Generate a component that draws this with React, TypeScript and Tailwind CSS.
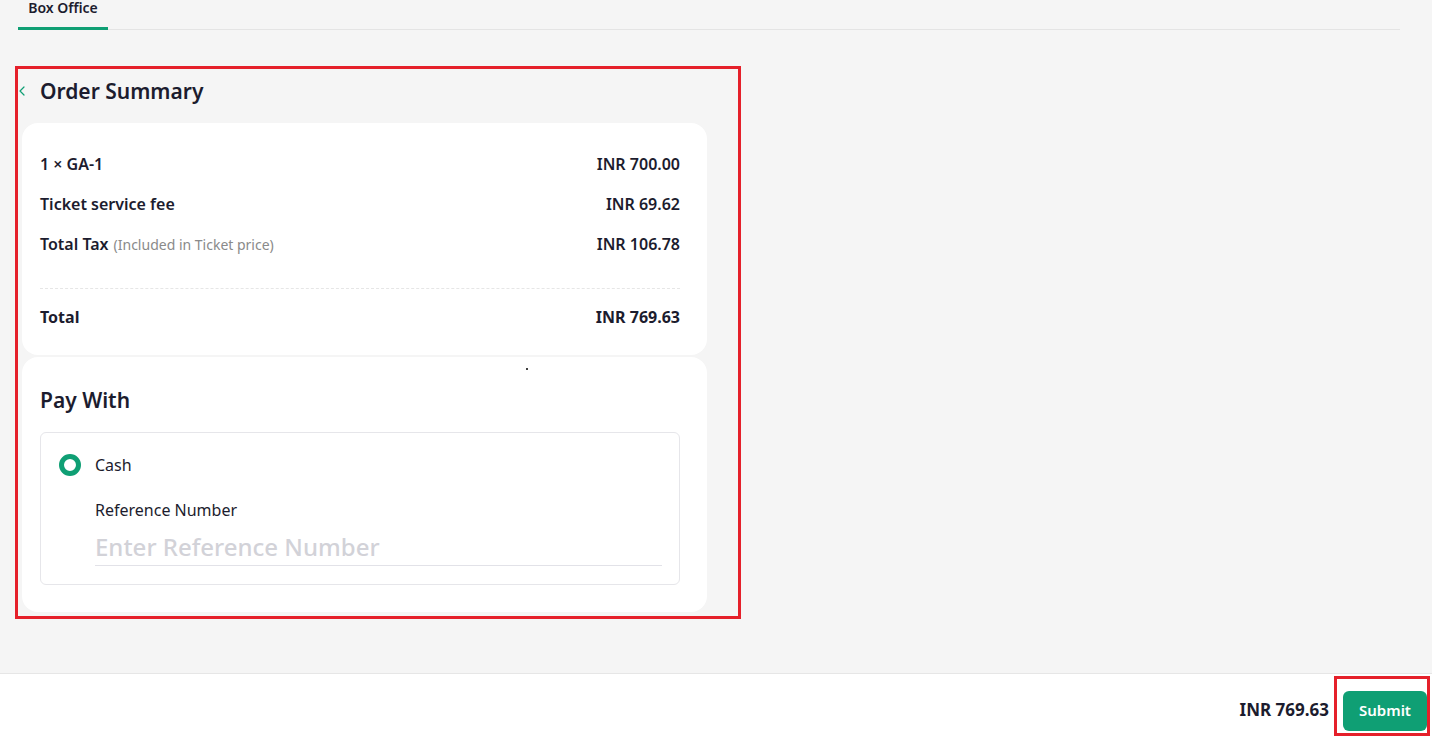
import { ChevronLeft } from "lucide-react";

const font = { fontFamily: '"Noto Sans", "Open Sans", sans-serif' };

type Line = { label: string; note?: string; amount: string };

const lines: Line[] = [
  { label: "1 × GA-1", amount: "INR 700.00" },
  { label: "Ticket service fee", amount: "INR 69.62" },
  { label: "Total Tax", note: "(Included in Ticket price)", amount: "INR 106.78" },
];

const App = () => {
  return (
    <div className="flex h-[737px] w-[1432px] flex-col overflow-hidden bg-[#f5f5f5] text-[#1c1c2e]" style={font}>
      <div className="flex-1">
        {/* tab strip */}
        <div className="mx-[18px] mr-[32px] flex h-[30px] border-b border-[#e4e4e4]">
          <div className="flex w-[90px] flex-col items-center justify-between">
            <span className="text-[14px] font-semibold leading-[16px] text-[#1c1c2e]">Box Office</span>
            <span className="-mb-px h-[3px] w-full bg-[#0f9f74]" />
          </div>
        </div>

        <div className="ml-[15px] mt-[36px] h-[553px] w-[726px] border-[3px] border-[#e5202a] pl-[4px]">
          <div className="relative h-[54px] pt-[7px]">
            <ChevronLeft className="absolute -left-[8px] top-[14px] h-[16px] w-[16px] text-[#0f9f74]" strokeWidth={1.8} />
            <h2 className="pl-[18px] text-[21px] font-semibold leading-[30px] text-[#1c1c2e]">Order Summary</h2>
          </div>

          <div className="h-[232px] w-[685px] rounded-[16px] bg-white pl-[18px] pr-[27px] pt-[21px]">
            <div className="flex flex-col">
              {lines.map((l) => (
                <div key={l.label} className="flex h-[40px] items-center justify-between text-[16px] font-semibold">
                  <span>
                    {l.label}
                    {l.note && <span className="ml-[5px] text-[14px] font-normal text-[#8a8a8a]">{l.note}</span>}
                  </span>
                  <span>{l.amount}</span>
                </div>
              ))}
            </div>
            <div className="mt-[24px] border-t border-dashed border-[#e6e6e6]" />
            <div className="flex h-[55px] items-center justify-between text-[16px] font-bold">
              <span>Total</span>
              <span>INR 769.63</span>
            </div>
          </div>

          <div className="relative mt-[2px] h-[255px] w-[685px] rounded-[16px] bg-white pl-[18px] pr-[27px] pt-[27px]">
            <span className="absolute left-[504px] top-[11px] h-[2px] w-[2px] rounded-full bg-black" />
            <h3 className="text-[21px] font-semibold leading-[32px]">Pay With</h3>
            <div className="mt-[16px] h-[153px] rounded-[6px] border border-[#e6e6ea] pl-[18px] pr-[17px] pt-[20px]">
              <label className="flex items-center gap-[14px]">
                <span className="h-[22px] w-[22px] rounded-full border-[5px] border-[#0f9f74] bg-white" />
                <span className="text-[16px]">Cash</span>
              </label>
              <div className="pl-[36px] pt-[22px]">
                <div className="text-[16px] leading-[22px]">Reference Number</div>
                <input
                  className="mt-[10px] w-full border-b border-[#e2e2e8] bg-transparent pb-[2px] text-[24px] font-medium leading-[32px] outline-none placeholder:text-[#d2d2d8]"
                  placeholder="Enter Reference Number"
                  style={font}
                />
              </div>
            </div>
          </div>
        </div>
      </div>

      {/* footer bar */}
      <div className="flex h-[64px] items-center justify-end border-t border-[#e6e6e6] bg-white pr-[2px]">
        <span className="mr-[5px] pt-[8px] text-[17px] font-bold">INR 769.63</span>
        <div className="flex h-[60px] w-[96px] items-end justify-end border-[3px] border-[#e5202a] pb-[2px]">
          <button className="h-[40px] w-[84px] rounded-[6px] bg-[#0f9f74] text-[15px] font-semibold text-white" style={font}>
            Submit
          </button>
        </div>
      </div>
    </div>
  );
};

export default App;
